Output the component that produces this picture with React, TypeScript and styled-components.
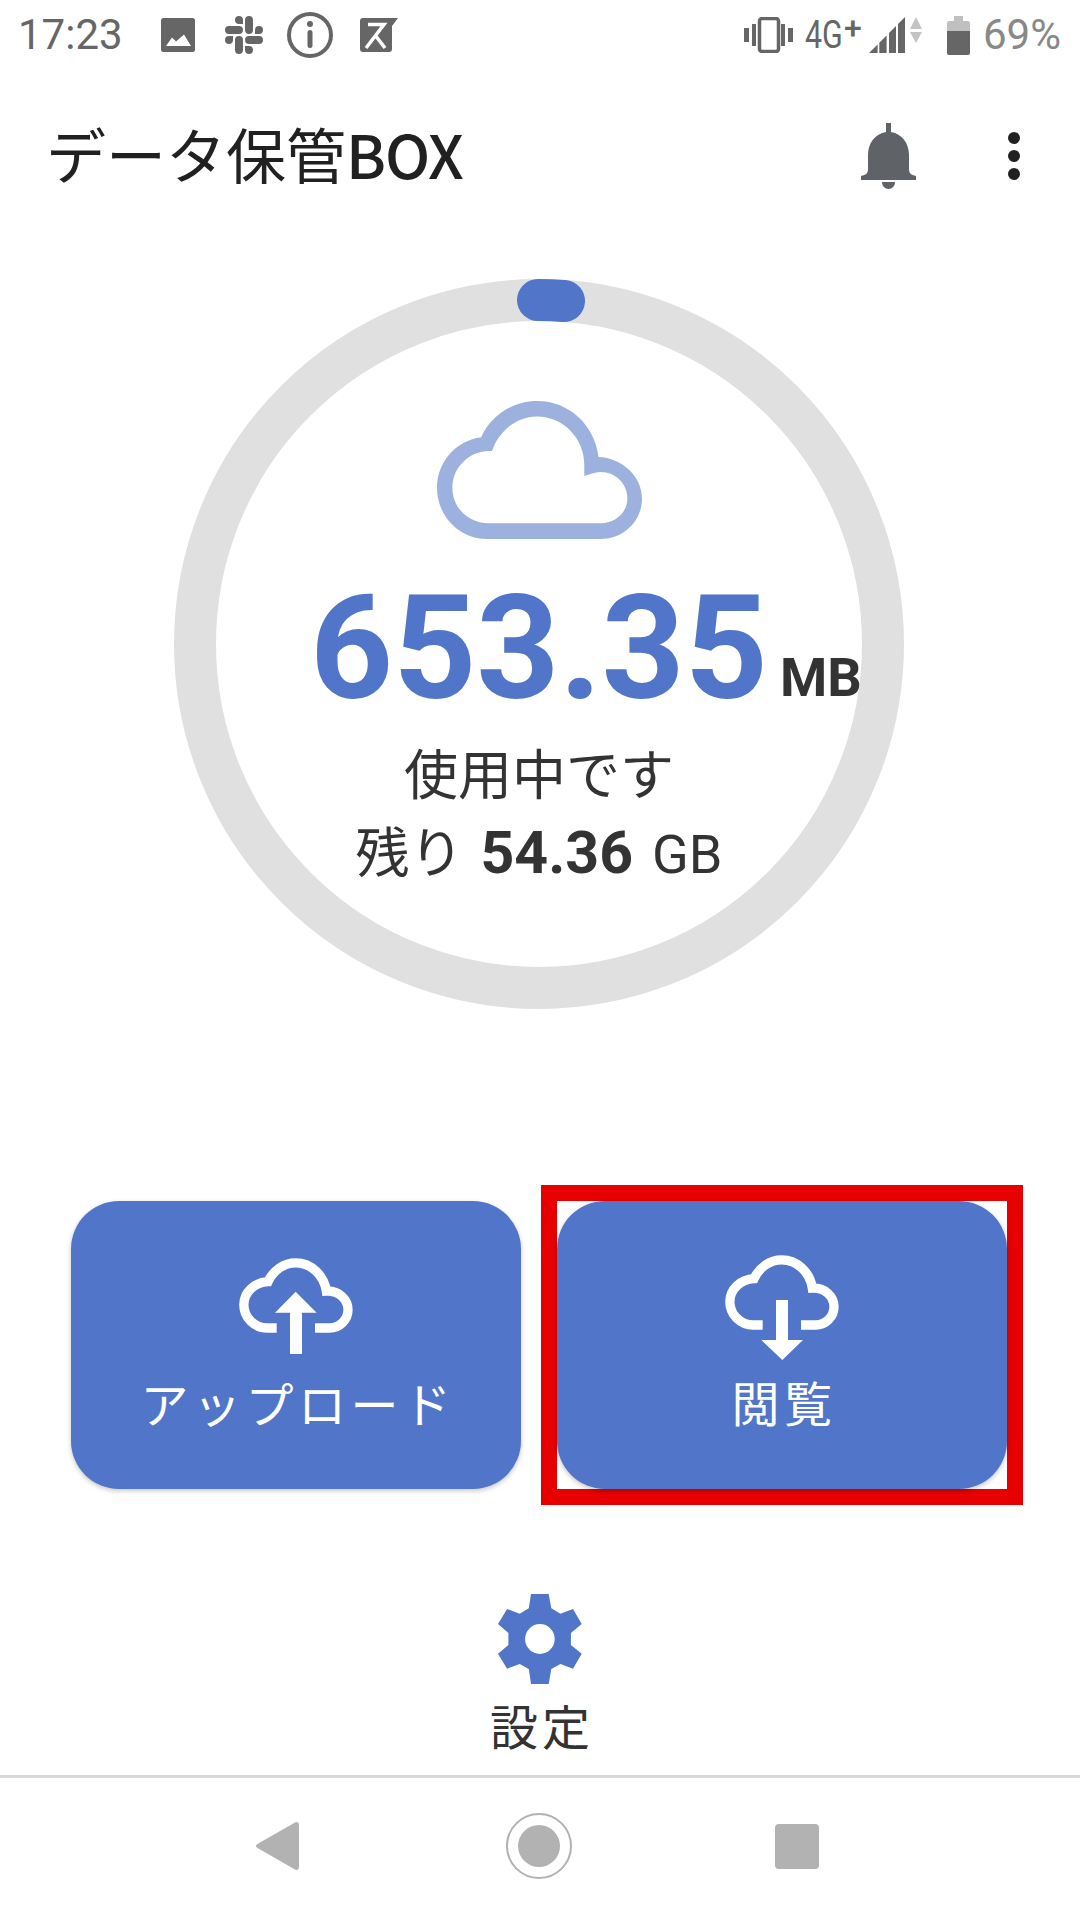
import React from "react";
import styled, { createGlobalStyle } from "styled-components";
import { SiSlack } from "react-icons/si";

const BLUE = "#5175c8";
const INK = "#333333";
const STATUS = "#666666";
const CJK = `"Noto Sans CJK JP", "Noto Sans", sans-serif`;

const GlobalStyle = createGlobalStyle`
  html, body {
    margin: 0;
    padding: 0;
    background: #ffffff;
  }
  * {
    box-sizing: border-box;
  }
`;

const Page = styled.div`
  width: 1080px;
  height: 1920px;
  display: flex;
  flex-direction: column;
  background: #ffffff;
  overflow: hidden;
  font-family: ${CJK};
`;

const StatusBar = styled.div`
  height: 72px;
  padding: 0 19px 2px 18px;
  display: flex;
  align-items: center;
  justify-content: space-between;
  color: ${STATUS};
  font-family: Roboto, sans-serif;
`;

const StatusGroup = styled.div`
  display: flex;
  align-items: center;
`;

const Time = styled.span`
  font-size: 42px;
  line-height: 1;
  margin-right: 38px;
`;

const StatusIcon = styled.svg<{ $left?: number }>`
  display: block;
  flex: none;
  margin-left: ${(p) => p.$left ?? 0}px;
`;

const SlackIcon = styled(SiSlack)`
  display: block;
  flex: none;
  width: 38px;
  height: 38px;
  margin-left: 30px;
  color: ${STATUS};
`;

const Network = styled.span`
  display: flex;
  align-items: flex-start;
  margin-left: 12px;
  width: 57px;
  height: 36px;
  font-size: 38px;
  line-height: 36px;
`;

const NetworkType = styled.span`
  display: inline-block;
  transform: scaleX(0.8);
  transform-origin: left center;
  width: 39px;
`;

const NetworkPlus = styled.span`
  font-size: 32px;
  font-weight: 500;
  line-height: 22px;
`;

const BatteryLevel = styled.span`
  margin-left: 13px;
  font-size: 42px;
  line-height: 1;
  color: #888888;
`;

const AppBar = styled.header`
  height: 122px;
  padding: 40px 60px 0 46px;
  display: flex;
  align-items: center;
`;

const Title = styled.h1`
  flex: 1;
  margin: 0;
  font-size: 60px;
  font-weight: 400;
  line-height: 1;
  color: #212121;
`;

const TitleLatin = styled.span`
  font-weight: 500;
  letter-spacing: -1px;
`;

const BellIcon = styled.svg`
  display: block;
  margin-right: 92px;
  margin-top: 6px;
`;

const MoreDots = styled.div`
  display: flex;
  flex-direction: column;
  gap: 6px;
  margin-top: 6px;
`;

const Dot = styled.span`
  width: 12px;
  height: 12px;
  border-radius: 50%;
  background: #212121;
`;

const GaugeSection = styled.section`
  padding: 85px 2px 0 0;
  display: flex;
  justify-content: center;
`;

const Gauge = styled.div`
  position: relative;
  width: 730px;
  height: 730px;
`;

const GaugeContent = styled.div`
  position: absolute;
  inset: 0;
  padding-top: 122px;
  display: flex;
  flex-direction: column;
  align-items: center;
`;

const CloudIcon = styled.svg`
  display: block;
`;

const UsageValue = styled.div`
  position: relative;
  margin-top: 34px;
  font-family: Roboto, sans-serif;
  font-weight: 700;
  font-size: 145px;
  line-height: 150px;
  color: ${BLUE};
`;

const UsageUnit = styled.span`
  position: absolute;
  left: 100%;
  bottom: 18px;
  margin-left: 12px;
  font-size: 54px;
  line-height: 1;
  color: ${INK};
`;

const UsageLabel = styled.div`
  margin-top: 13px;
  font-size: 54px;
  line-height: 72px;
  color: ${INK};
`;

const Remaining = styled.div`
  margin-top: 7px;
  display: flex;
  align-items: baseline;
  color: ${INK};
  font-size: 54px;
  line-height: 70px;
`;

const RemainingValue = styled.strong`
  margin-left: 17px;
  font-family: Roboto, sans-serif;
  font-size: 59px;
  font-weight: 700;
`;

const RemainingUnit = styled.span`
  margin-left: 19px;
  font-family: Roboto, sans-serif;
  font-size: 54px;
`;

const ActionRow = styled.div`
  margin-top: 176px;
  padding-left: 71px;
  height: 320px;
  display: flex;
  align-items: center;
`;

const Highlight = styled.div`
  margin-left: 20px;
  border: 16px solid #e60000;
  width: 482px;
  height: 320px;
`;

const ActionButton = styled.button<{ $iconTop: number }>`
  width: 450px;
  height: 288px;
  padding: ${(p) => p.$iconTop}px 0 0;
  border: 0;
  border-radius: 48px;
  background: ${BLUE};
  box-shadow: 0 2px 5px rgba(0, 0, 0, 0.22);
  display: flex;
  flex-direction: column;
  align-items: center;
  color: #ffffff;
  font-family: ${CJK};
`;

const ActionLabel = styled.span<{ $gap: number }>`
  margin-top: ${(p) => p.$gap}px;
  padding-left: 4px;
  font-size: 48px;
  line-height: 52px;
  letter-spacing: 4.500px;
  white-space: nowrap;
`;

const Settings = styled.div`
  flex: 1;
  padding-top: 89px;
  display: flex;
  flex-direction: column;
  align-items: center;
`;

const SettingsLabel = styled.span`
  margin-top: 12px;
  padding-left: 4px;
  font-size: 48px;
  line-height: 56px;
  letter-spacing: 4px;
  color: ${INK};
`;

const NavBar = styled.nav`
  height: 145px;
  border-top: 3px solid #d8d8d8;
  padding: 0 261px 6px 256px;
  display: flex;
  align-items: center;
  justify-content: space-between;
`;

const NavBack = styled.svg`
  display: block;
`;

const NavHome = styled.span`
  width: 66px;
  height: 66px;
  margin-left: 4px;
  border: 2.500px solid #b2b2b2;
  border-radius: 50%;
  display: flex;
  align-items: center;
  justify-content: center;
`;

const NavHomeInner = styled.span`
  width: 42px;
  height: 42px;
  border-radius: 50%;
  background: #b2b2b2;
`;

const NavSquare = styled.span`
  width: 44px;
  height: 45px;
  border-radius: 4px;
  background: #b2b2b2;
`;

const CloudArrow = ({ direction }: { direction: "up" | "down" }) => (
  <CloudIcon
    width={114}
    height={direction === "up" ? 96 : 105}
    viewBox={direction === "up" ? "0 0 342 288" : "0 0 342 315"}
  >
    <path
      d="M113 210H85C46 210 14.5 178 14.5 140C14.5 103 46 73 87 71C103 37 135 14.5 170 14.5C217 14.5 255 52 262 99C300 97 327 125 327 155C327 185 302 210 272 210H228"
      fill="none"
      stroke="#ffffff"
      strokeWidth="28"
    />
    {direction === "up" ? (
      <path d="M170 101L233 164H189V288H153V164H108Z" fill="#ffffff" />
    ) : (
      <path d="M153 135H189V255H234L172 315L109 255H153Z" fill="#ffffff" />
    )}
  </CloudIcon>
);

const App = () => {
  return (
    <Page>
      <GlobalStyle />
      <StatusBar>
        <StatusGroup>
          <Time>17:23</Time>
          <StatusIcon width="34" height="34" viewBox="0 0 34 34">
            <rect width="34" height="34" rx="2.5" fill={STATUS} />
            <path d="M5 28L11 19.500L15 23.500L23 16.500L30 28Z" fill="#ffffff" />
          </StatusIcon>
          <SlackIcon />
          <StatusIcon $left={24} width="46" height="46" viewBox="0 0 46 46">
            <circle cx="23" cy="23" r="21" fill="none" stroke={STATUS} strokeWidth="4" />
            <circle cx="23" cy="12" r="3" fill={STATUS} />
            <rect x="20.500" y="18" width="5" height="18" rx="2.500" fill={STATUS} />
          </StatusIcon>
          <StatusIcon $left={27} width="38" height="34" viewBox="0 0 38 34">
            <path d="M3 0H38L32 8V31C32 33 31 34 29 34H3C1 34 0 33 0 31V3C0 1 1 0 3 0Z" fill={STATUS} />
            <path d="M8 6.500H24L6 30M15 17L25 30" fill="none" stroke="#ffffff" strokeWidth="3.500" />
          </StatusIcon>
        </StatusGroup>
        <StatusGroup>
          <StatusIcon width="49" height="36" viewBox="0 0 49 36">
            <rect x="0" y="11" width="5" height="14" fill={STATUS} />
            <rect x="8" y="7" width="4" height="22" fill={STATUS} />
            <rect x="15.500" y="1.500" width="19" height="33" rx="2.500" fill="none" stroke={STATUS} strokeWidth="3.500" />
            <rect x="37" y="7" width="4" height="22" fill={STATUS} />
            <rect x="44" y="11" width="5" height="14" fill={STATUS} />
          </StatusIcon>
          <Network>
            <NetworkType>4G</NetworkType>
            <NetworkPlus>+</NetworkPlus>
          </Network>
          <StatusIcon $left={7} width="53" height="36" viewBox="0 0 53 36">
            <path d="M0 36L8.600 27.400V36Z" fill={STATUS} />
            <path d="M10.300 25.700L17.600 18.400V36H10.300Z" fill={STATUS} />
            <path d="M20 16L27 9V36H20Z" fill={STATUS} />
            <path d="M29 7L36 0V36H29Z" fill={STATUS} />
            <path d="M47 0L53 12H41Z" fill="#c4c4c4" />
            <path d="M41 15H53L47 26Z" fill="#c4c4c4" />
          </StatusIcon>
          <StatusIcon $left={25} width="23" height="39" viewBox="0 0 23 39">
            <path d="M7 0H16V5H21C22 5 23 6 23 7V15H0V7C0 6 1 5 2 5H7Z" fill="#c0c0c0" />
            <path d="M0 15H23V37C23 38 22 39 21 39H2C1 39 0 38 0 37Z" fill={STATUS} />
          </StatusIcon>
          <BatteryLevel>69%</BatteryLevel>
        </StatusGroup>
      </StatusBar>

      <AppBar>
        <Title>
          データ保管<TitleLatin>BOX</TitleLatin>
        </Title>
        <BellIcon width="55" height="66" viewBox="0 0 55 66">
          <path
            d="M25 0H30V9C41 11 48 20 48 32V46C48 50 50 52 55 53V57H0V53C5 52 7 50 7 46V32C7 20 14 11 25 9Z"
            fill="#5f6368"
          />
          <path d="M21 59H34C34 63 31 66 27.500 66C24 66 21 63 21 59Z" fill="#5f6368" />
        </BellIcon>
        <MoreDots>
          <Dot />
          <Dot />
          <Dot />
        </MoreDots>
      </AppBar>

      <GaugeSection>
        <Gauge>
          <svg width="730" height="730" viewBox="0 0 730 730">
            <circle cx="365" cy="365" r="344" fill="none" stroke="#e0e0e0" strokeWidth="42" />
            <path
              d="M364 21A344 344 0 0 1 390 22"
              fill="none"
              stroke={BLUE}
              strokeWidth="42"
              strokeLinecap="round"
            />
          </svg>
          <GaugeContent>
            <CloudIcon width="205" height="138" viewBox="0 0 533 350" preserveAspectRatio="none">
              <path
                fillRule="evenodd"
                fill="#9db1de"
                d="M115 92C140 37 197 0 260 0C345 0 410 62 420 142C480 144 533 190 533 247C533 305 485 350 425 350H130C58 350 0 292 0 220C0 155 50 100 115 92ZM143 127C160 78 205 39 260 39C328 39 383 94 383 162V190C395 186 410 180 425 180C465 180 495 210 495 247C495 282 465 310 425 310H135C80 310 40 270 40 220C40 168 85 127 135 127Z"
              />
            </CloudIcon>
            <UsageValue>
              653.35
              <UsageUnit>MB</UsageUnit>
            </UsageValue>
            <UsageLabel>使用中です</UsageLabel>
            <Remaining>
              残り
              <RemainingValue>54.36</RemainingValue>
              <RemainingUnit>GB</RemainingUnit>
            </Remaining>
          </GaugeContent>
        </Gauge>
      </GaugeSection>

      <ActionRow>
        <ActionButton $iconTop={57}>
          <CloudArrow direction="up" />
          <ActionLabel $gap={22}>アップロード</ActionLabel>
        </ActionButton>
        <Highlight>
          <ActionButton $iconTop={54}>
            <CloudArrow direction="down" />
            <ActionLabel $gap={15}>閲覧</ActionLabel>
          </ActionButton>
        </Highlight>
      </ActionRow>

      <Settings>
        <svg width="84" height="90" viewBox="0 0 84 90">
          <path
            fillRule="evenodd"
            fill={BLUE}
            d="M33 0H50.700L53.300 14.300L62.400 19.700L75 15L83.700 30L72.900 39V51L83.700 59.700L75 74.700L62.400 70L53.300 75L50.700 90H33L30.800 75L21.700 70L9.100 74.700L0 59.700L10.400 51V39L0 30L9.100 15L21.700 19.700L30.800 14.300ZM41.900 30A14.800 15 0 1 0 41.900 60A14.800 15 0 1 0 41.900 30Z"
          />
        </svg>
        <SettingsLabel>設定</SettingsLabel>
      </Settings>

      <NavBar>
        <NavBack width="43" height="48" viewBox="0 0 43 48">
          <path
            d="M39 0.500C41 -0.500 43 0.500 43 3V45C43 47.500 41 48.500 39 47.500L1.500 26C-0.500 25 -0.500 23 1.500 22Z"
            fill="#b2b2b2"
          />
        </NavBack>
        <NavHome>
          <NavHomeInner />
        </NavHome>
        <NavSquare />
      </NavBar>
    </Page>
  );
};

export default App;
